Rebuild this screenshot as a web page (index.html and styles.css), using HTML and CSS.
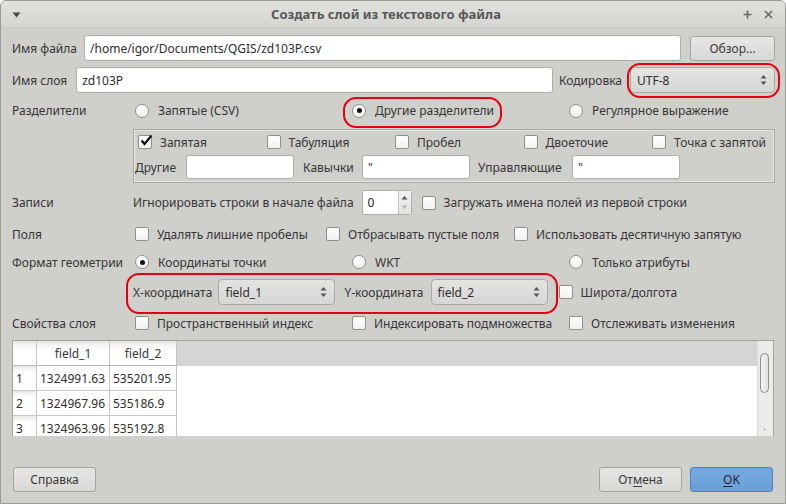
FILE: index.html
```html
<!DOCTYPE html>
<html lang="ru">
<head>
<meta charset="utf-8">
<title>Создать слой из текстового файла</title>
<link rel="stylesheet" href="styles.css">
</head>
<body>
<div class="window">
  <div class="titlebar">
    <svg class="tb-menu" width="9" height="6" viewBox="0 0 9 6"><path d="M0.5 0.5 H8.5 L4.5 5.5 Z" fill="#4a4a4a"/></svg>
    <span class="title">Создать слой из текстового файла</span>
    <svg class="tb-icon" width="9" height="9" viewBox="0 0 9 9"><path d="M4.5 0.5 V8.5 M0.5 4.5 H8.5" stroke="#666" stroke-width="1.6"/></svg>
    <svg class="tb-icon" width="9" height="9" viewBox="0 0 9 9"><path d="M1 1 L8 8 M8 1 L1 8" stroke="#666" stroke-width="1.6"/></svg>
  </div>

  <div class="content">
    <div class="row r-file">
      <span class="lbl-inline">Имя файла</span>
      <div class="input grow">/home/igor/Documents/QGIS/zd103P.csv</div>
      <div class="btn browse">Обзор...</div>
    </div>

    <div class="row r-layer">
      <span class="lbl-inline">Имя слоя</span>
      <div class="input grow">zd103P</div>
      <span class="lbl-inline enc-lbl">Кодировка</span>
      <div class="combo enc">UTF-8
        <svg class="arr" width="7" height="12" viewBox="0 0 7 12"><path d="M0.5 4.5 L3.5 1 L6.5 4.5 Z M0.5 7.5 L3.5 11 L6.5 7.5 Z" fill="#555"/></svg>
      </div>
    </div>

    <div class="row r-delim">
      <span class="lbl">Разделители</span>
      <div class="cols3">
        <span class="opt"><span class="radio"></span>Запятые (CSV)</span>
        <span class="opt"><span class="radio on"></span>Другие разделители</span>
        <span class="opt"><span class="radio"></span>Регулярное выражение</span>
      </div>
    </div>

    <div class="row r-group">
      <span class="lbl"></span>
      <div class="group">
        <div class="cols5">
          <span class="opt"><span class="check on"><svg width="14" height="14" viewBox="0 0 14 14"><path d="M2.5 6.5 L5.5 10 L12.5 1.5" fill="none" stroke="#111" stroke-width="2.2"/></svg></span>Запятая</span>
          <span class="opt"><span class="check"></span>Табуляция</span>
          <span class="opt"><span class="check"></span>Пробел</span>
          <span class="opt"><span class="check"></span>Двоеточие</span>
          <span class="opt"><span class="check"></span>Точка с запятой</span>
        </div>
        <div class="grow-row">
          <span class="g-lbl l-other">Другие</span>
          <div class="input small"></div>
          <span class="g-lbl l-quote">Кавычки</span>
          <div class="input small">"</div>
          <span class="g-lbl l-esc">Управляющие</span>
          <div class="input small">"</div>
        </div>
      </div>
    </div>

    <div class="row r-rec">
      <span class="lbl">Записи</span>
      <span class="lbl-inline">Игнорировать строки в начале файла</span>
      <div class="spin">
        <span class="spin-val">0</span>
        <span class="spin-btns">
          <svg width="7" height="5" viewBox="0 0 7 5"><path d="M0.5 4.5 L3.5 1 L6.5 4.5 Z" fill="#555"/></svg>
          <svg width="7" height="5" viewBox="0 0 7 5"><path d="M0.5 0.5 L3.5 4 L6.5 0.5 Z" fill="#b5b5b3"/></svg>
        </span>
      </div>
      <span class="opt header-opt"><span class="check"></span>Загружать имена полей из первой строки</span>
    </div>

    <div class="row r-fields">
      <span class="lbl">Поля</span>
      <div class="cols-fields">
        <span class="opt"><span class="check"></span>Удалять лишние пробелы</span>
        <span class="opt"><span class="check"></span>Отбрасывать пустые поля</span>
        <span class="opt"><span class="check"></span>Использовать десятичную запятую</span>
      </div>
    </div>

    <div class="row r-geom">
      <span class="lbl">Формат геометрии</span>
      <div class="cols3">
        <span class="opt"><span class="radio on"></span>Координаты точки</span>
        <span class="opt"><span class="radio"></span>WKT</span>
        <span class="opt"><span class="radio"></span>Только атрибуты</span>
      </div>
    </div>

    <div class="row r-coord">
      <span class="lbl"></span>
      <span class="lbl-inline">X-координата</span>
      <div class="combo xy x">field_1
        <svg class="arr" width="7" height="12" viewBox="0 0 7 12"><path d="M0.5 4.5 L3.5 1 L6.5 4.5 Z M0.5 7.5 L3.5 11 L6.5 7.5 Z" fill="#555"/></svg>
      </div>
      <span class="lbl-inline y-lbl">Y-координата</span>
      <div class="combo xy y">field_2
        <svg class="arr" width="7" height="12" viewBox="0 0 7 12"><path d="M0.5 4.5 L3.5 1 L6.5 4.5 Z M0.5 7.5 L3.5 11 L6.5 7.5 Z" fill="#555"/></svg>
      </div>
      <span class="opt latlon"><span class="check"></span>Широта/долгота</span>
    </div>

    <div class="row r-props">
      <span class="lbl">Свойства слоя</span>
      <div class="cols3">
        <span class="opt"><span class="check"></span>Пространственный индекс</span>
        <span class="opt"><span class="check"></span>Индексировать подмножества</span>
        <span class="opt"><span class="check"></span>Отслеживать изменения</span>
      </div>
    </div>

    <div class="table">
      <div class="tbl-main">
        <div class="tr thead">
          <div class="td c0 hd"></div>
          <div class="td c1 hd center">field_1</div>
          <div class="td c2 hd center">field_2</div>
          <div class="td rest hd-empty"></div>
        </div>
        <div class="tr">
          <div class="td c0 rh">1</div>
          <div class="td c1">1324991.63</div>
          <div class="td c2">535201.95</div>
          <div class="td rest"></div>
        </div>
        <div class="tr">
          <div class="td c0 rh">2</div>
          <div class="td c1">1324967.96</div>
          <div class="td c2">535186.9</div>
          <div class="td rest"></div>
        </div>
        <div class="tr">
          <div class="td c0 rh">3</div>
          <div class="td c1">1324963.96</div>
          <div class="td c2">535192.8</div>
          <div class="td rest"></div>
        </div>
      </div>
      <div class="vscroll"><div class="handle"></div><div class="dot"></div></div>
    </div>

    <div class="row r-buttons">
      <div class="btn">Справка</div>
      <div class="spacer"></div>
      <div class="btn">От<u>м</u>ена</div>
      <div class="btn ok"><u>O</u>K</div>
    </div>
  </div>

  <div class="mark mark-enc"></div>
  <div class="mark mark-delim"></div>
  <div class="mark mark-coord"></div>
</div>
</body>
</html>
```

FILE: styles.css
```css
* { box-sizing: border-box; }

html, body { margin: 0; padding: 0; background: #ffffff; }

body {
  font-family: "Noto Sans", "Open Sans", sans-serif;
  font-size: 12px;
  color: #363636;
}

.window {
  position: relative;
  width: 786px;
  height: 504px;
  border: 1px solid #9c9c9a;
  border-radius: 6px 6px 0 0;
  background: #cfcfcc;
  overflow: hidden;
}

.titlebar {
  height: 27px;
  display: flex;
  align-items: center;
  padding: 0 12px 0 11px;
  background: linear-gradient(#e1e1de, #d5d5d2);
  border-bottom: 1px solid #c8c8c5;
}
.tb-menu { margin-top: 1px; }
.title {
  flex: 1;
  text-align: center;
  font-weight: bold;
  font-size: 13px;
  color: #575757;
  padding-left: 20px;
}
.tb-icon { margin-left: 12px; }

.content {
  padding: 7px 10px 0 11px;
  display: flex;
  flex-direction: column;
}

.row {
  display: flex;
  align-items: center;
}

.lbl { width: 121px; flex: none; }
.lbl-inline { flex: none; }

.input {
  height: 26px;
  background: #ffffff;
  border: 1px solid #aeaeac;
  border-radius: 3px;
  padding: 0 5px;
  display: flex;
  align-items: center;
  color: #2e2e2e;
}
.grow { flex: 1; }

.btn {
  height: 25px;
  border: 1px solid #a3a3a1;
  border-radius: 3px;
  background: linear-gradient(#e6e6e4, #d8d8d6);
  display: flex;
  align-items: center;
  justify-content: center;
  width: 83px;
  color: #3a3a3a;
}
.btn u { text-decoration-thickness: 1px; text-underline-offset: 2px; }

.combo {
  position: relative;
  height: 26px;
  border: 1px solid #a9a9a7;
  border-radius: 4px;
  background: linear-gradient(#e3e3e1, #d6d6d4);
  display: flex;
  align-items: center;
  padding: 0 6px;
  color: #2e2e2e;
}
.combo .arr { position: absolute; right: 7px; top: 6px; }

/* row 1 */
.r-file { height: 26px; }
.r-file .input { margin-left: 7px; }
.browse { margin-left: 9px; width: 85px; }

/* row 2 */
.r-layer { height: 26px; margin-top: 6px; }
.r-layer .input { margin-left: 9px; }
.enc-lbl { margin-left: 6px; }
.enc { width: 145px; margin-left: 8px; }

/* options */
.opt {
  display: flex;
  align-items: center;
  white-space: nowrap;
}
.radio {
  width: 14px;
  height: 14px;
  border-radius: 50%;
  border: 1px solid #8f8f8d;
  background: linear-gradient(#ffffff, #f1f1f0);
  margin: 0 9px 0 2px;
  flex: none;
  position: relative;
}
.radio.on::after {
  content: "";
  position: absolute;
  left: 3.5px; top: 3.5px;
  width: 5px; height: 5px;
  border-radius: 50%;
  background: #111;
}
.check {
  width: 14px;
  height: 14px;
  border: 1px solid #8f8f8d;
  border-radius: 2px;
  background: linear-gradient(#ffffff, #f1f1f0);
  margin: 0 8px 0 2px;
  flex: none;
  position: relative;
}
.check.on svg { position: absolute; left: 0; top: -2px; }

.cols3 {
  display: grid;
  grid-template-columns: 217px 217px auto;
}

.r-delim { height: 27px; margin-top: 4px; }

/* group */
.r-group { margin-top: 5px; align-items: stretch; }
.lbl:empty { width: 121px; }
.group {
  width: 642px;
  height: 54px;
  border: 1px solid #a9a9a7;
  box-shadow: inset 0 0 0 1px #e4e4e2;
  display: flex;
  flex-direction: column;
}
.cols5 {
  height: 24px;
  display: grid;
  grid-template-columns: repeat(5, 128.5px);
  padding-left: 2px;
  align-items: center;
}
.grow-row {
  height: 24px;
  margin-top: 1px;
  display: flex;
  align-items: center;
  padding-left: 1px;
}
.input.small { width: 108px; height: 24px; }
.l-other { width: 51px; }
.l-quote { width: 59px; margin-left: 9px; }
.l-esc { width: 94px; margin-left: 8px; }

/* records */
.r-rec { height: 25px; margin-top: 7px; }
.spin {
  margin-left: 8px;
  width: 50px;
  height: 25px;
  background: #ffffff;
  border: 1px solid #aeaeac;
  border-radius: 3px;
  display: flex;
  align-items: stretch;
}
.spin-val { flex: 1; padding-left: 5px; display: flex; align-items: center; color: #222; }
.spin-btns {
  width: 13px;
  border-left: 1px solid #c4c4c2;
  background: linear-gradient(#f2f2f0, #e2e2e0);
  display: flex;
  flex-direction: column;
  justify-content: space-around;
  align-items: center;
  padding: 2px 0;
}
.header-opt { margin-left: 8px; }

.r-fields { height: 24px; margin-top: 7px; }
.cols-fields {
  display: grid;
  grid-template-columns: 191px 188px auto;
}

.r-geom { height: 24px; margin-top: 4px; }

.r-coord { height: 26px; margin-top: 5px; }
.xy { margin-left: 6px; }
.x { width: 117px; }
.y { width: 117px; margin-left: 7px; }
.y-lbl { margin-left: 9px; }
.latlon { margin-left: 11px; }
.latlon .check { margin-left: 0; margin-right: 8px; }

.r-props { height: 24px; margin-top: 6px; }

/* table */
.table {
  margin-top: 5px;
  margin-left: 0;
  margin-right: 1px;
  height: 96px;
  border: 1px solid #a2a2a0;
  border-bottom: none;
  display: flex;
  background: #ffffff;
  overflow: hidden;
}
.tbl-main { flex: 1; display: flex; flex-direction: column; }
.tr { display: flex; height: 25px; flex: none; }
.td {
  border-right: 1px solid #c6c6c4;
  border-bottom: 1px solid #c6c6c4;
  display: flex;
  align-items: center;
  padding-left: 3px;
  color: #2e2e2e;
  white-space: nowrap;
}
.c0 { width: 24px; }
.c1 { width: 73px; }
.c2 { width: 67px; }
.rest { flex: 1; border-right: none; border-bottom: none; }
.hd { background: linear-gradient(#e4e4e2 0, #f7f7f6 5px, #ffffff 12px); color: #3a3a3a; }
.center { justify-content: center; padding-left: 0; }
.hd-empty { background: #d5d5d3; border-bottom: none; }
.thead .td { border-bottom-color: #b8b8b6; }
.rh { background: linear-gradient(#e8e8e6 0, #ffffff 6px); }

.vscroll {
  width: 16px;
  background: #ebebe9;
  border-left: 1px solid #dcdcda;
  position: relative;
}
.handle {
  position: absolute;
  left: 2px;
  top: 12px;
  width: 9px;
  height: 40px;
  border: 1px solid #8e8e8c;
  border-radius: 5px;
  background: linear-gradient(90deg, #f4f4f3, #e2e2e0);
}
.dot {
  position: absolute;
  left: 6px;
  bottom: 6px;
  width: 1px;
  height: 1px;
  background: #666;
}

/* buttons */
.r-buttons { height: 25px; margin-top: 31px; padding: 0 2px 0 1px; }
.spacer { flex: 1; }
.r-buttons .btn + .btn { margin-left: 8px; }
.ok {
  background: linear-gradient(#74a9e0, #6a9fd8);
  border-color: #4f82bd;
  color: #1f2a36;
}

/* annotation marks */
.mark {
  position: absolute;
  border: 2px solid #e4000e;
  border-radius: 13px;
  pointer-events: none;
}
.mark-enc { left: 626px; top: 62px; width: 153px; height: 35px; }
.mark-delim { left: 342px; top: 96px; width: 159px; height: 31px; }
.mark-coord { left: 125px; top: 272px; width: 432px; height: 41px; }
```
